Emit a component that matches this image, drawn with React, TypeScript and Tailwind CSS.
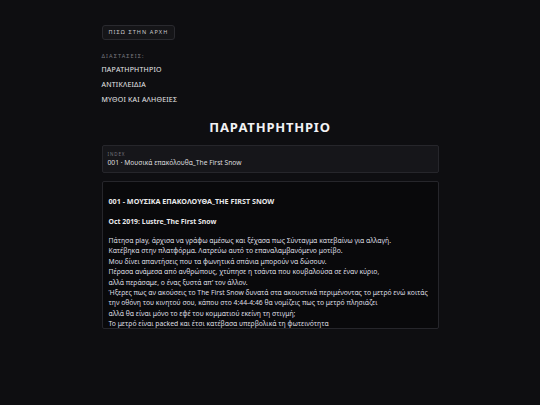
import React from 'react';

const lines = [
  'Πάτησα play, άρχισα να γράφω αμέσως και ξέχασα πως Σύνταγμα κατεβαίνω για αλλαγή.',
  'Κατέβηκα στην πλατφόρμα. Λατρεύω αυτό το επαναλαμβανόμενο μοτίβο.',
  'Μου δίνει απαντήσεις που τα φωνητικά σπάνια μπορούν να δώσουν.',
  'Πέρασα ανάμεσα από ανθρώπους, χτύπησε η τσάντα που κουβαλούσα σε έναν κύριο,',
  'αλλά περάσαμε, ο ένας ξυστά απ’ τον άλλον.',
  'Ήξερες πως αν ακούσεις το The First Snow δυνατά στα ακουστικά περιμένοντας το μετρό ενώ κοιτάς',
  'την οθόνη του κινητού σου, κάπου στο 4:44-4:46 θα νομίζεις πως το μετρό πλησιάζει',
  'αλλά θα είναι μόνο το εφέ του κομματιού εκείνη τη στιγμή;',
  'Το μετρό είναι packed και έτσι κατέβασα υπερβολικά τη φωτεινότητα',
  'και έμεινα να κοιτάζω το τραγούδι να παίζει.',
];

export default function App() {
  return (
    <div
      className="min-h-[405px] w-full bg-[#0e0e11] text-[#e4e4e7]"
      style={{ fontFamily: '"Noto Sans", "Open Sans", sans-serif' }}
    >
      <div className="mx-auto w-[337px] pt-[25px]">
        <button className="block h-[15px] rounded-[3px] border border-[#2a2a2f] bg-[#151518] px-[6px] text-[5.5px] leading-[13px] tracking-[0.2em] text-[#c9c9cc]">
          ΠΙΣΩ ΣΤΗΝ ΑΡΧΗ
        </button>

        <div className="mt-[12px] text-[5.5px] leading-[8px] tracking-[0.2em] text-[#7a7a80]">ΔΙΑΣΤΑΣΕΙΣ:</div>
        <div className="mt-[4px] flex flex-col gap-[4px] text-[7px] leading-[11px] tracking-[0.03em] text-[#e8e8ea]">
          <span>ΠΑΡΑΤΗΡΗΤΗΡΙΟ</span>
          <span>ΑΝΤΙΚΛΕΙΔΙΑ</span>
          <span>ΜΥΘΟΙ ΚΑΙ ΑΛΗΘΕΙΕΣ</span>
        </div>

        <h1 className="mt-[13px] text-center text-[13px] font-bold leading-[18px] tracking-[0.06em] text-[#f2f2f4]">
          ΠΑΡΑΤΗΡΗΤΗΡΙΟ
        </h1>

        <div className="mt-[9px] h-[28px] rounded-[2px] border border-[#26262b] bg-[#16161a] px-[5px] pt-[4px]">
          <div className="text-[4.5px] leading-[8px] tracking-[0.2em] text-[#75757b]">INDEX</div>
          <div className="text-[6.7px] leading-[10px] text-[#dcdcdf]">001 · Μουσικά επακόλουθα_The First Snow</div>
        </div>

        <div className="mt-[8px] h-[148px] overflow-hidden rounded-[2px] border border-[#26262b] bg-[#09090b] px-[6px] pt-[14px]">
          <div className="text-[7.2px] font-bold leading-[10px] text-[#e8e8ea]">
            001 - ΜΟΥΣΙΚΑ ΕΠΑΚΟΛΟΥΘΑ_THE FIRST SNOW
          </div>
          <div className="mt-[11px] text-[6.9px] font-bold leading-[10px] text-[#e8e8ea]">
            Oct 2019: Lustre_The First Snow
          </div>
          <div className="mt-[9px] text-[6.8px] leading-[10.4px] text-[#dedee1]">
            {lines.map((l) => (
              <div key={l} className="whitespace-nowrap">{l}</div>
            ))}
          </div>
        </div>
      </div>
    </div>
  );
}
